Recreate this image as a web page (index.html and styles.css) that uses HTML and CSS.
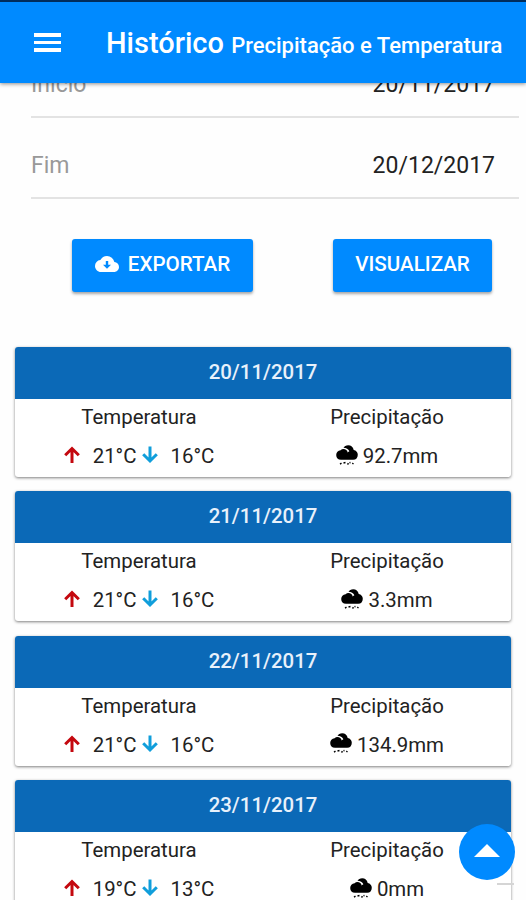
FILE: index.html
```html
<!DOCTYPE html>
<html lang="pt-BR">
<head>
  <meta charset="UTF-8">
  <meta name="viewport" content="width=device-width, initial-scale=1.0">
  <title>Histórico</title>
  <link rel="stylesheet" href="styles.css">
</head>
<body>
  <!-- Shared icons -->
  <svg class="sprite" aria-hidden="true">
    <symbol id="arrow-up" viewBox="0 0 16 18">
      <path d="M8 17V2.5M1.2 9.3L8 2.5L14.8 9.3" fill="none" stroke="currentColor" stroke-width="3"/>
    </symbol>
    <symbol id="arrow-down" viewBox="0 0 16 18">
      <path d="M8 .5V15M1.2 8.2L8 15L14.8 8.2" fill="none" stroke="currentColor" stroke-width="3"/>
    </symbol>
    <symbol id="rain" viewBox="0 0 22 20">
      <path d="M5 14.8C2 14.8 .2 12.8.2 10C.2 7.5 2 5.4 4.6 5.2C6 3.8 8.7 3.8 10.3 5C11 5.7 11.5 6.5 11.7 7.4C12.2 6.9 12.8 6.6 13.4 6.3C12.4 4 10.2 2.8 7.5 2.8C8.4 1.2 10 .2 12.2.2C15 .2 17.2 2 17.7 4.9C20.2 5.4 21.8 7.2 21.8 9.8C21.8 12.8 20 14.8 17.2 14.8Z"/>
      <path d="M4 19.1L5.5 18.2M7.5 18L9.5 17.5M11.5 19.4L12.5 18.3M13.5 17.8L14.5 17.5M16.5 19.2L17.3 18" fill="none" stroke="currentColor" stroke-width="1.5"/>
    </symbol>
  </svg>

  <header class="toolbar">
    <button class="menu-button" aria-label="Menu">
      <span></span>
      <span></span>
      <span></span>
    </button>
    <h1 class="title">Histórico <small>Precipitação e Temperatura</small></h1>
  </header>

  <main class="content">
    <!-- Period -->
    <div class="period">
      <div class="field">
        <span class="label">Início</span>
        <span class="value">20/11/2017</span>
      </div>
      <div class="field">
        <span class="label">Fim</span>
        <span class="value">20/12/2017</span>
      </div>
    </div>

    <div class="actions">
      <button class="button export-btn">
        <svg class="cloud" viewBox="0 0 24 16" aria-hidden="true">
          <path fill="#fff" fill-rule="evenodd" d="M19.35 6.04A7.49 7.49 0 0 0 12 0C9.11 0 6.6 1.64 5.35 4.04A5.99 5.99 0 0 0 0 10c0 3.31 2.69 6 6 6h13c2.76 0 5-2.24 5-5 0-2.64-2.05-4.78-4.65-4.96zM16 8.7l-4 4-4-4h2.8V5h2.4v3.7z"/>
        </svg>
        EXPORTAR
      </button>
      <button class="button view-btn">VISUALIZAR</button>
    </div>

    <!-- Daily records -->
    <section class="card">
      <h2 class="card-header">20/11/2017</h2>
      <div class="card-body">
        <div class="column">
          <p>Temperatura</p>
          <p class="reading"><svg class="arrow up"><use href="#arrow-up"/></svg><span>21°C</span><svg class="arrow down"><use href="#arrow-down"/></svg><span>16°C</span></p>
        </div>
        <div class="column">
          <p>Precipitação</p>
          <p class="reading"><svg class="rain"><use href="#rain"/></svg><span>92.7mm</span></p>
        </div>
      </div>
    </section>

    <section class="card">
      <h2 class="card-header">21/11/2017</h2>
      <div class="card-body">
        <div class="column">
          <p>Temperatura</p>
          <p class="reading"><svg class="arrow up"><use href="#arrow-up"/></svg><span>21°C</span><svg class="arrow down"><use href="#arrow-down"/></svg><span>16°C</span></p>
        </div>
        <div class="column">
          <p>Precipitação</p>
          <p class="reading"><svg class="rain"><use href="#rain"/></svg><span>3.3mm</span></p>
        </div>
      </div>
    </section>

    <section class="card">
      <h2 class="card-header">22/11/2017</h2>
      <div class="card-body">
        <div class="column">
          <p>Temperatura</p>
          <p class="reading"><svg class="arrow up"><use href="#arrow-up"/></svg><span>21°C</span><svg class="arrow down"><use href="#arrow-down"/></svg><span>16°C</span></p>
        </div>
        <div class="column">
          <p>Precipitação</p>
          <p class="reading"><svg class="rain"><use href="#rain"/></svg><span>134.9mm</span></p>
        </div>
      </div>
    </section>

    <section class="card">
      <h2 class="card-header">23/11/2017</h2>
      <div class="card-body">
        <div class="column">
          <p>Temperatura</p>
          <p class="reading"><svg class="arrow up"><use href="#arrow-up"/></svg><span>19°C</span><svg class="arrow down"><use href="#arrow-down"/></svg><span>13°C</span></p>
        </div>
        <div class="column">
          <p>Precipitação</p>
          <p class="reading"><svg class="rain"><use href="#rain"/></svg><span>0mm</span></p>
        </div>
      </div>
    </section>
  </main>

  <button class="fab" aria-label="Voltar ao topo">
    <svg viewBox="0 0 26 13" aria-hidden="true"><path d="M0 13L13 0L26 13Z" fill="#fff"/></svg>
  </button>
  <span class="fab-line"></span>
</body>
</html>
```

FILE: styles.css
```css
* {
  margin: 0;
  padding: 0;
  box-sizing: border-box;
}

body {
  height: 100vh;
  overflow: hidden;
  display: flex;
  flex-direction: column;
  background-color: #fefefe;
  color: #222;
  font-family: Roboto, "Liberation Sans", sans-serif;
}

button {
  border: none;
  font-family: inherit;
  cursor: pointer;
}

.sprite {
  display: none;
}

/* Toolbar */
.toolbar {
  flex: none;
  height: 83px;
  display: flex;
  align-items: center;
  padding-left: 34px;
  border-top: 2px solid #002c5c;
  background-color: #008aff;
  box-shadow: 0 1px 4px rgba(0, 0, 0, 0.45);
  position: relative;
  z-index: 2;
}

.menu-button {
  width: 27px;
  display: flex;
  flex-direction: column;
  gap: 4px;
  background: none;
}

.menu-button span {
  height: 3.5px;
  background-color: #fff;
}

.title {
  margin-left: 45px;
  padding-top: 4px;
  color: #fff;
  font-size: 29px;
  font-weight: 500;
  line-height: 34px;
  white-space: nowrap;
}

.title small {
  font-size: 22px;
}

.content {
  flex: 1;
  min-height: 0;
}

/* Period */
.period {
  margin-top: -46px;
  padding: 0 7px 0 31px;
}

.field {
  height: 81px;
  display: flex;
  align-items: center;
  justify-content: space-between;
  padding: 16px 24px 0 0;
  border-bottom: 2px solid #e3e3e3;
  font-size: 23px;
}

.label {
  color: #999;
}

/* Buttons */
.actions {
  display: flex;
  justify-content: space-between;
  padding: 40px 34px 55px 72px;
}

.button {
  height: 53px;
  display: flex;
  align-items: center;
  justify-content: center;
  padding-bottom: 3px;
  border-radius: 3px;
  background-color: #008aff;
  box-shadow: 0 2px 3px rgba(0, 0, 0, 0.35);
  color: #fff;
  font-size: 20.6px;
  font-weight: 500;
}

.export-btn {
  width: 181px;
  gap: 9px;
}

.view-btn {
  width: 159px;
}

.cloud {
  width: 24px;
  height: 16px;
}

/* Cards */
.card {
  height: 130px;
  margin: 0 15px 14.4px;
  overflow: hidden;
  border-radius: 3px;
  background-color: #fff;
  box-shadow: 0 1px 3px rgba(0, 0, 0, 0.5);
}

.card-header {
  height: 52px;
  background-color: #0b69b7;
  color: #e8f1fb;
  font-size: 20.4px;
  font-weight: 500;
  line-height: 51px;
  text-align: center;
}

.card-body {
  display: grid;
  grid-template-columns: 1fr 1fr;
  font-size: 20.4px;
}

.column {
  text-align: center;
}

.column p {
  height: 37px;
  line-height: 37px;
}

.column .reading {
  height: 41px;
  display: flex;
  align-items: center;
  justify-content: center;
}

.arrow {
  width: 16px;
  height: 18px;
  margin-bottom: 3px;
}

.arrow.up {
  margin-right: 13px;
  color: #c4080f;
}

.arrow.down {
  margin-right: 13px;
  margin-left: 5px;
  color: #109edb;
}

.rain {
  width: 22px;
  height: 20px;
  margin-right: 5px;
  margin-bottom: 4px;
  color: #000;
}

/* Back to top */
.fab {
  width: 56px;
  height: 56px;
  display: flex;
  align-items: center;
  justify-content: center;
  border-radius: 50%;
  background-color: #008aff;
  position: fixed;
  right: 11px;
  bottom: 20px;
}

.fab svg {
  width: 26px;
  height: 13px;
  margin-bottom: 3px;
}

.fab-line {
  width: 17px;
  height: 2px;
  background-color: #d5d5d5;
  position: fixed;
  right: 12px;
  bottom: 15px;
}
```
